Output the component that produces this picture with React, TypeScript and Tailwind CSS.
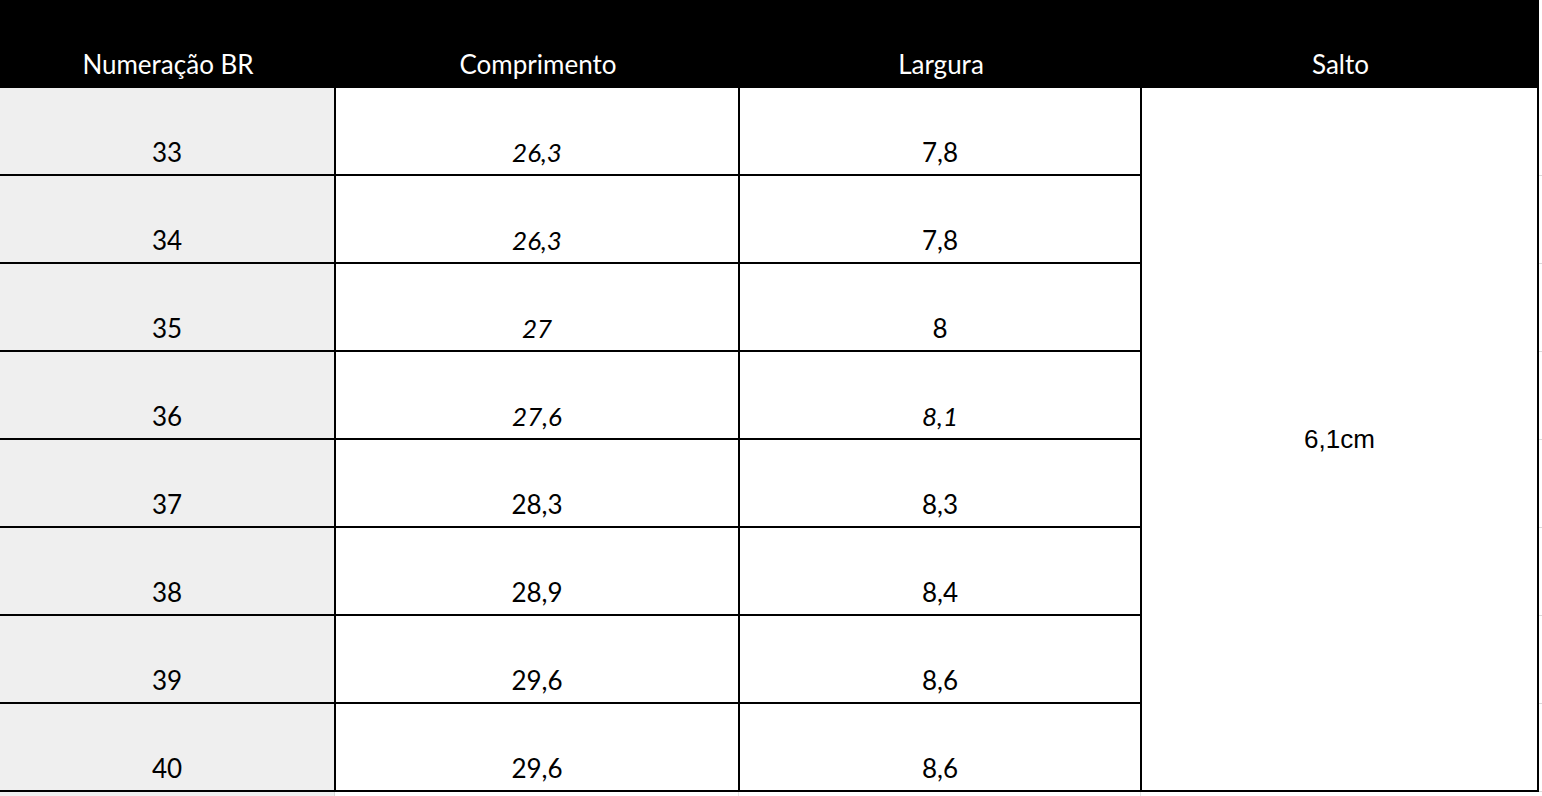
const rows = [
  { br: "33", comp: "26,3", compItalic: true, larg: "7,8", largItalic: false },
  { br: "34", comp: "26,3", compItalic: true, larg: "7,8", largItalic: false },
  { br: "35", comp: "27", compItalic: true, larg: "8", largItalic: false },
  { br: "36", comp: "27,6", compItalic: true, larg: "8,1", largItalic: true },
  { br: "37", comp: "28,3", compItalic: false, larg: "8,3", largItalic: false },
  { br: "38", comp: "28,9", compItalic: false, larg: "8,4", largItalic: false },
  { br: "39", comp: "29,6", compItalic: false, larg: "8,6", largItalic: false },
  { br: "40", comp: "29,6", compItalic: false, larg: "8,6", largItalic: false },
];

export default function App() {
  return (
    <div className="w-[1542px] h-[796px] overflow-hidden bg-white font-['Lato','Liberation_Sans',sans-serif] text-[26px] leading-none text-black">
      {/* cabeçalho */}
      <div className="flex h-[88px] w-[1539px] bg-black text-white">
        <div className="flex w-[336px] items-end justify-center pb-[11px]">Numeração BR</div>
        <div className="flex w-[404px] items-end justify-center pb-[11px]">Comprimento</div>
        <div className="flex w-[402px] items-end justify-center pb-[11px]">Largura</div>
        <div className="flex w-[397px] items-end justify-center pb-[11px]">Salto</div>
      </div>

      <div className="flex">
        <div className="flex w-[1142px] flex-col">
          {rows.map((r) => (
            <div key={r.br} className="flex h-[88px] border-b-2 border-black">
              <div className="flex w-[336px] items-end justify-center border-r-2 border-black bg-[#efefef] pb-[9px]">
                {r.br}
              </div>
              <div className={`flex w-[404px] items-end justify-center border-r-2 border-black pb-[9px] ${r.compItalic ? "italic" : ""}`}>
                {r.comp}
              </div>
              <div className={`flex w-[402px] items-end justify-center border-r-2 border-black pb-[9px] ${r.largItalic ? "italic" : ""}`}>
                {r.larg}
              </div>
            </div>
          ))}
        </div>
        <div className="flex w-[397px] items-center justify-center border-r-2 border-b-2 border-black font-['Liberation_Sans',sans-serif] text-[26px]">
          6,1cm
        </div>
        <div className="flex w-[3px] flex-col">
          {rows.map((r) => (
            <div key={r.br} className="h-[88px] border-b border-[#d9d9d9]"></div>
          ))}
        </div>
      </div>

      {/* linha seguinte da planilha */}
      <div className="flex h-[4px]">
        <div className="w-[335px] border-r border-[#d9d9d9] bg-[#efefef]"></div>
        <div className="w-[404px] border-r border-[#e5e5e5]"></div>
        <div className="w-[402px] border-r border-[#e5e5e5]"></div>
      </div>
    </div>
  );
}
